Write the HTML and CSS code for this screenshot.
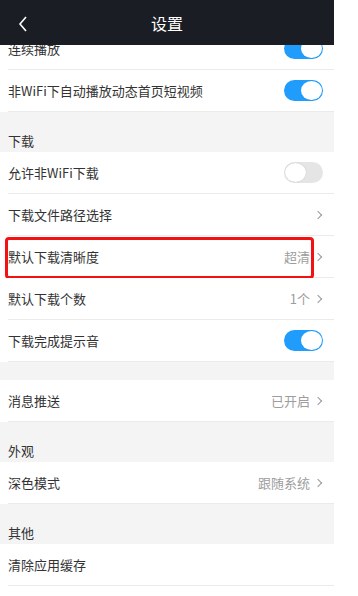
FILE: index.html
```html
<!DOCTYPE html>
<html lang="zh-CN">
  <head>
    <meta charset="UTF-8" />
    <meta name="viewport" content="width=device-width, initial-scale=1.0" />
    <title>设置</title>
    <link rel="stylesheet" href="styles.css">
  </head>
  <body>
    <div class="app">
      <div class="topbar">
        <svg class="back" width="10" height="16" viewBox="0 0 10 16">
          <polyline points="8,1 2,8 8,15" fill="none" stroke="#fff" stroke-width="1.6" />
        </svg>
        <h1>设置</h1>
      </div>

      <div class="list">
        <div class="row">
          <div class="inner">
            <span class="label">连续播放</span>
            <span class="switch on"></span>
          </div>
        </div>
        <div class="row">
          <div class="inner">
            <span class="label">非WiFi下自动播放动态首页短视频</span>
            <span class="switch on"></span>
          </div>
        </div>

        <div class="section">下载</div>
        <div class="row">
          <div class="inner">
            <span class="label">允许非WiFi下载</span>
            <span class="switch"></span>
          </div>
        </div>
        <div class="row">
          <div class="inner">
            <span class="label">下载文件路径选择</span>
            <span class="arrow"></span>
          </div>
        </div>
        <div class="row marked">
          <div class="inner">
            <span class="label">默认下载清晰度</span>
            <span class="value">超清</span>
            <span class="arrow"></span>
          </div>
        </div>
        <div class="row">
          <div class="inner">
            <span class="label">默认下载个数</span>
            <span class="value">1个</span>
            <span class="arrow"></span>
          </div>
        </div>
        <div class="row">
          <div class="inner">
            <span class="label">下载完成提示音</span>
            <span class="switch on"></span>
          </div>
        </div>

        <div class="gap"></div>
        <div class="row">
          <div class="inner">
            <span class="label">消息推送</span>
            <span class="value">已开启</span>
            <span class="arrow"></span>
          </div>
        </div>

        <div class="section">外观</div>
        <div class="row">
          <div class="inner">
            <span class="label">深色模式</span>
            <span class="value">跟随系统</span>
            <span class="arrow"></span>
          </div>
        </div>

        <div class="section">其他</div>
        <div class="row">
          <div class="inner">
            <span class="label">清除应用缓存</span>
          </div>
        </div>
      </div>
    </div>
  </body>
</html>
```

FILE: styles.css
```css
* {
  margin: 0;
  padding: 0;
  box-sizing: border-box;
}
body {
  background: #fff;
  font-family: "Noto Sans CJK SC", "Noto Sans", sans-serif;
  font-size: 13px;
  color: #333;
  height: 596px;
  overflow: hidden;
}

.app {
  width: 334px;
}

.topbar {
  position: sticky;
  top: 0;
  z-index: 2;
  height: 45px;
  background-color: #1b1d25;
  display: flex;
  align-items: center;
  justify-content: center;
}
.topbar h1 {
  color: #fff;
  font-size: 16px;
  font-weight: 400;
}
.back {
  position: absolute;
  left: 18px;
  top: 16px;
}

.list {
  margin-top: -17px;
}

.row {
  position: relative;
  height: 42px;
  padding-left: 8px;
  background: #fff;
}
.inner {
  height: 100%;
  display: flex;
  align-items: center;
  padding-right: 11px;
  border-bottom: 1px solid #ebebeb;
}
.label {
  flex: 1;
}
.value {
  color: #9d9d9d;
  margin-right: 5px;
}
.arrow {
  width: 6px;
  height: 6px;
  border-top: 1px solid #999;
  border-right: 1px solid #999;
  transform: rotate(45deg);
  margin-right: 2px;
}

.switch {
  position: relative;
  width: 39px;
  height: 21px;
  border-radius: 11px;
  background: #e5e5e5;
}
.switch::after {
  content: "";
  position: absolute;
  left: 1px;
  top: 1px;
  width: 21px;
  height: 19px;
  border-radius: 50%;
  background: #fff;
  box-shadow: 0 0 1px rgba(0, 0, 0, 0.25);
}
.switch.on {
  background: #1f9cfc;
}
.switch.on::after {
  left: auto;
  right: 1px;
  box-shadow: none;
}

.section {
  height: 40px;
  background: #f4f4f4;
  display: flex;
  align-items: flex-end;
  padding: 0 0 2px 8px;
  line-height: 18px;
}
.gap {
  height: 18px;
  background: #f4f4f4;
}

.marked::after {
  content: "";
  position: absolute;
  left: 5px;
  right: 20px;
  top: 1px;
  bottom: -1px;
  border: 3px solid #f31212;
  border-radius: 4px;
}
```
